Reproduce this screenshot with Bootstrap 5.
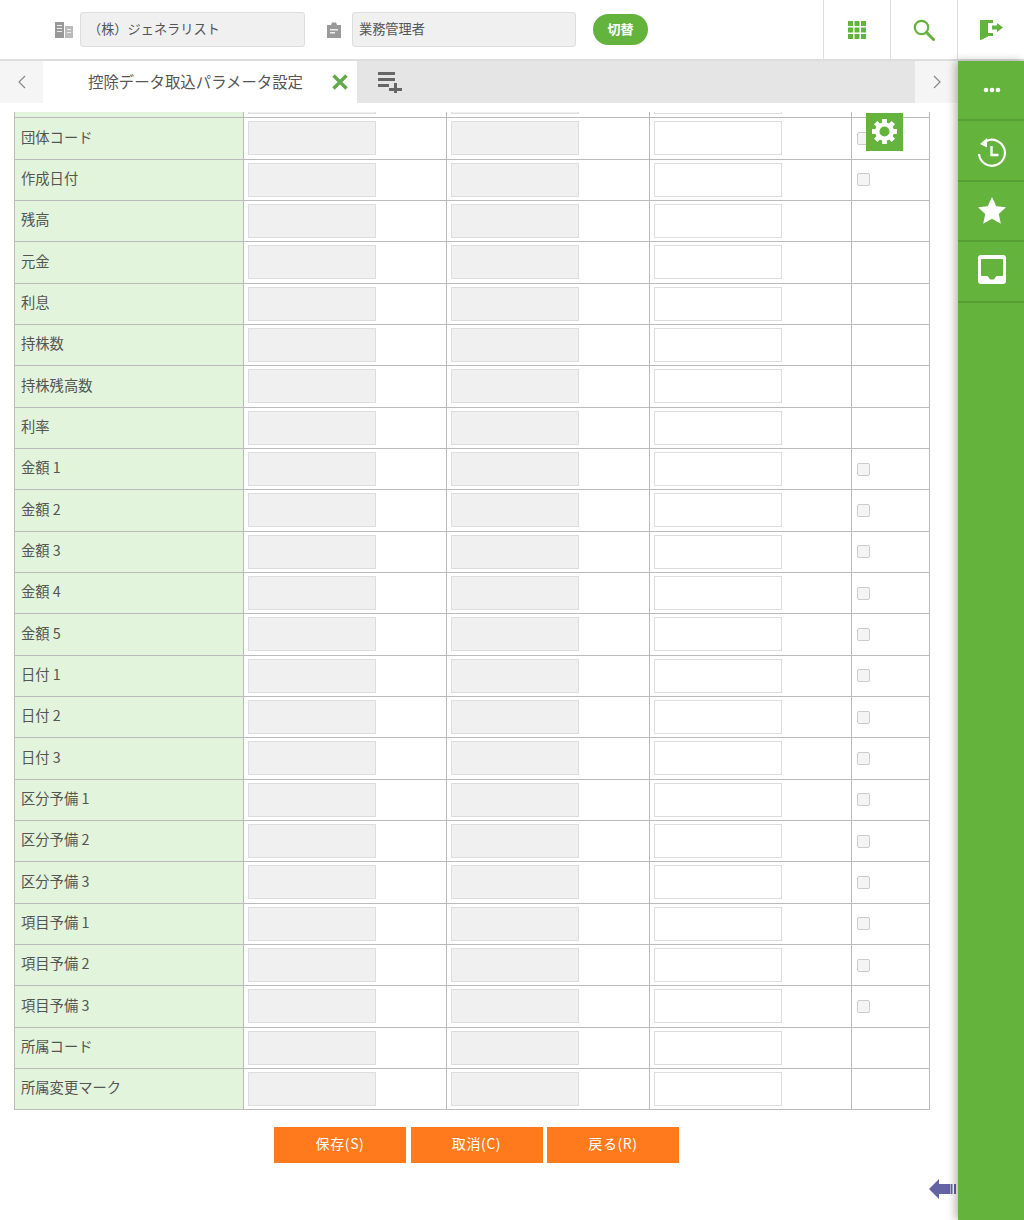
<!DOCTYPE html>
<html lang="ja">
<head>
<meta charset="utf-8">
<title>控除データ取込パラメータ設定</title>
<link href="https://cdn.jsdelivr.net/npm/bootstrap@5.3.0/dist/css/bootstrap.min.css" rel="stylesheet">
<style>
html,body{height:1220px;overflow:hidden}
body{font-family:"Noto Sans CJK JP","Liberation Sans",sans-serif;font-size:14px;color:#555;background:#fff}
.shell{position:relative;width:1024px;height:1220px;overflow:hidden}
.topbar{height:61px;border-bottom:2px solid #ddd}
.co-icon{width:18px;height:18px;fill:#999}
.co-field{height:35px;background:#f0f0f0;border:1px solid #ddd;border-radius:3px;color:#555;font-size:13.2px;padding:0 6px;line-height:31px}
.co-a{width:225px;margin-left:7px;padding-left:7px}
.co-b{width:224px;margin-left:9px}
.co-icon-b{margin-left:20px}
.sw-btn{width:55px;height:31px;margin-left:17px;background:#63b33c;color:#fff;border-radius:16px;font-size:13px;font-weight:700;padding:0 0 2px;border:0}
.sw-btn:hover{background:#63b33c;color:#fff}
.top-cell{width:67px;height:59px;border-left:1px solid #ddd}
.work{width:958px;height:1159px}
.tabbar{height:42px;background:#e5e5e5}
.tab-arrow{width:43px;background:#f5f5f5;color:#888}
.tab-on{width:314px;background:#fff;font-size:15.4px;color:#555;padding-left:45px;padding-right:9px}
.tab-add{margin-left:21px;padding-top:1px}
.clip{height:1005px;margin-top:9px;overflow:hidden;padding:0 28px 0 14px}
.grid{width:915px;table-layout:fixed;border-collapse:collapse;margin-top:-36px}
.grid td{height:41.33px;padding:0 4px;border:1px solid #bbb;vertical-align:middle}
.grid td.lab{background:#e2f4dc;padding:0 6px 4px;color:#555;font-size:14.3px}
.grid .cell-in{display:block;width:128px;height:34px;border:1px solid #ddd;background:#f0f0f0;padding:0 4px;border-radius:0}
.grid .cell-in.live{background:#fff}
.grid input[type=checkbox]{display:block;width:13px;height:13px;margin:0 0 0 1px;border:1px solid #ccc;border-radius:2px;background:#f4f4f4;appearance:none}
.act-row{margin-top:10px;padding-right:5px;gap:4.5px}
.act-btn{width:132px;height:36px;background:#ff7a1c;color:#fff;border:0;border-radius:0;font-size:14px;letter-spacing:.6px;padding:0 0 3px}
.act-btn:hover{background:#ff7a1c;color:#fff}
.rail{position:absolute;left:958px;top:61px;width:66px;height:1159px;background:#63b33c;box-shadow:-3px 0 8px rgba(0,0,0,.28)}
.rail-i{height:60.4px;padding-left:2px;border-bottom:2px solid #579f35}
.rail-clock{padding-top:4px}
.rail-box{padding-bottom:4px}
.gear-box{position:absolute;left:866px;top:113px;width:37px;height:38px;background:#63b33c;padding:0 1px 2px 0}
.back-arrow{position:absolute;left:929px;top:1178px}
</style>
</head>
<body>
<div class="shell">
  <header class="topbar d-flex align-items-center">
    <div class="d-flex align-items-center flex-grow-1" style="padding-left:55px">
      <svg class="co-icon" viewBox="0 0 18 18"><path d="M0 1h9v16H0z"/><path d="M10 5h8v12h-8z" fill="#bbb"/><path d="M2 4h5v1H2zM2 7h5v1H2zM2 10h5v1H2zM12 8h4v1h-4zM12 11h4v1h-4z" fill="#eee"/></svg>
      <div class="co-field co-a">（株）ジェネラリスト</div>
      <svg class="co-icon co-icon-b" viewBox="0 0 18 18"><path d="M2 4h4l1-2.500h4l1 2.500h4v13H2z"/><path d="M5 8h8v1.500H5zM5 11h5v1.500H5z" fill="#eee"/></svg>
      <div class="co-field co-b">業務管理者</div>
      <button type="button" class="btn sw-btn">切替</button>
    </div>
    <div class="top-cell d-flex align-items-center justify-content-center">
      <svg width="18" height="18" viewBox="0 0 18 18" fill="#63b33c"><path d="M0 0h5v5H0zM6.500 0h5v5h-5zM13 0h5v5h-5zM0 6.500h5v5H0zM6.500 6.500h5v5h-5zM13 6.500h5v5h-5zM0 13h5v5H0zM6.500 13h5v5h-5zM13 13h5v5h-5z"/></svg>
    </div>
    <div class="top-cell d-flex align-items-center justify-content-center">
      <svg width="22" height="22" viewBox="0 0 22 22" fill="none" stroke="#63b33c"><circle cx="8.500" cy="8.500" r="6.700" stroke-width="2.200"/><path d="M13.500 13.500l7 7" stroke-width="3" stroke-linecap="round"/></svg>
    </div>
    <div class="top-cell d-flex align-items-center justify-content-center">
      <svg width="23" height="20" viewBox="0 0 23 20" fill="#63b33c"><path d="M0 0h13v3H8v13.500L1 20H0z"/><path d="M8 13h5v3H8z"/><path d="M12 5.500h5V3l6 4.500-6 4.500V9.500h-5z"/></svg>
    </div>
  </header>
  <main class="work">
    <div class="tabbar d-flex">
      <div class="tab-arrow d-flex align-items-center justify-content-center">
        <svg width="8" height="14" viewBox="0 0 8 14" fill="none" stroke="#888" stroke-width="1.200"><path d="M7 1L1 7l6 6"/></svg>
      </div>
      <div class="tab-on d-flex align-items-center justify-content-between">
        <span>控除データ取込パラメータ設定</span>
        <svg width="16" height="16" viewBox="0 0 16 16" fill="none" stroke="#63a84a" stroke-width="3.400"><path d="M1.500 1.500l13 13M14.500 1.500l-13 13"/></svg>
      </div>
      <div class="tab-add d-flex align-items-center flex-grow-1">
        <svg width="25" height="21" viewBox="0 0 25 21" fill="#666"><path d="M0 0h17v3H0zM0 6h17v3H0zM0 12h11v3H0zM16 11h3v5h5v3h-5v2h-3v-2h-5v-3h5z"/></svg>
      </div>
      <div class="tab-arrow d-flex align-items-center justify-content-center">
        <svg width="8" height="14" viewBox="0 0 8 14" fill="none" stroke="#888" stroke-width="1.200"><path d="M1 1l6 6-6 6"/></svg>
      </div>
    </div>
    <div class="clip">
      <table class="grid">
        <colgroup><col style="width:229px"><col style="width:203px"><col style="width:203px"><col style="width:202px"><col style="width:78px"></colgroup>
        <tbody>
          <tr><td class="lab">&nbsp;</td><td><input class="form-control cell-in" disabled></td><td><input class="form-control cell-in" disabled></td><td><input class="form-control cell-in live"></td><td></td></tr>
          <tr><td class="lab">団体コード</td><td><input class="form-control cell-in" disabled></td><td><input class="form-control cell-in" disabled></td><td><input class="form-control cell-in live"></td><td><input type="checkbox"></td></tr>
          <tr><td class="lab">作成日付</td><td><input class="form-control cell-in" disabled></td><td><input class="form-control cell-in" disabled></td><td><input class="form-control cell-in live"></td><td><input type="checkbox"></td></tr>
          <tr><td class="lab">残高</td><td><input class="form-control cell-in" disabled></td><td><input class="form-control cell-in" disabled></td><td><input class="form-control cell-in live"></td><td></td></tr>
          <tr><td class="lab">元金</td><td><input class="form-control cell-in" disabled></td><td><input class="form-control cell-in" disabled></td><td><input class="form-control cell-in live"></td><td></td></tr>
          <tr><td class="lab">利息</td><td><input class="form-control cell-in" disabled></td><td><input class="form-control cell-in" disabled></td><td><input class="form-control cell-in live"></td><td></td></tr>
          <tr><td class="lab">持株数</td><td><input class="form-control cell-in" disabled></td><td><input class="form-control cell-in" disabled></td><td><input class="form-control cell-in live"></td><td></td></tr>
          <tr><td class="lab">持株残高数</td><td><input class="form-control cell-in" disabled></td><td><input class="form-control cell-in" disabled></td><td><input class="form-control cell-in live"></td><td></td></tr>
          <tr><td class="lab">利率</td><td><input class="form-control cell-in" disabled></td><td><input class="form-control cell-in" disabled></td><td><input class="form-control cell-in live"></td><td></td></tr>
          <tr><td class="lab">金額 1</td><td><input class="form-control cell-in" disabled></td><td><input class="form-control cell-in" disabled></td><td><input class="form-control cell-in live"></td><td><input type="checkbox"></td></tr>
          <tr><td class="lab">金額 2</td><td><input class="form-control cell-in" disabled></td><td><input class="form-control cell-in" disabled></td><td><input class="form-control cell-in live"></td><td><input type="checkbox"></td></tr>
          <tr><td class="lab">金額 3</td><td><input class="form-control cell-in" disabled></td><td><input class="form-control cell-in" disabled></td><td><input class="form-control cell-in live"></td><td><input type="checkbox"></td></tr>
          <tr><td class="lab">金額 4</td><td><input class="form-control cell-in" disabled></td><td><input class="form-control cell-in" disabled></td><td><input class="form-control cell-in live"></td><td><input type="checkbox"></td></tr>
          <tr><td class="lab">金額 5</td><td><input class="form-control cell-in" disabled></td><td><input class="form-control cell-in" disabled></td><td><input class="form-control cell-in live"></td><td><input type="checkbox"></td></tr>
          <tr><td class="lab">日付 1</td><td><input class="form-control cell-in" disabled></td><td><input class="form-control cell-in" disabled></td><td><input class="form-control cell-in live"></td><td><input type="checkbox"></td></tr>
          <tr><td class="lab">日付 2</td><td><input class="form-control cell-in" disabled></td><td><input class="form-control cell-in" disabled></td><td><input class="form-control cell-in live"></td><td><input type="checkbox"></td></tr>
          <tr><td class="lab">日付 3</td><td><input class="form-control cell-in" disabled></td><td><input class="form-control cell-in" disabled></td><td><input class="form-control cell-in live"></td><td><input type="checkbox"></td></tr>
          <tr><td class="lab">区分予備 1</td><td><input class="form-control cell-in" disabled></td><td><input class="form-control cell-in" disabled></td><td><input class="form-control cell-in live"></td><td><input type="checkbox"></td></tr>
          <tr><td class="lab">区分予備 2</td><td><input class="form-control cell-in" disabled></td><td><input class="form-control cell-in" disabled></td><td><input class="form-control cell-in live"></td><td><input type="checkbox"></td></tr>
          <tr><td class="lab">区分予備 3</td><td><input class="form-control cell-in" disabled></td><td><input class="form-control cell-in" disabled></td><td><input class="form-control cell-in live"></td><td><input type="checkbox"></td></tr>
          <tr><td class="lab">項目予備 1</td><td><input class="form-control cell-in" disabled></td><td><input class="form-control cell-in" disabled></td><td><input class="form-control cell-in live"></td><td><input type="checkbox"></td></tr>
          <tr><td class="lab">項目予備 2</td><td><input class="form-control cell-in" disabled></td><td><input class="form-control cell-in" disabled></td><td><input class="form-control cell-in live"></td><td><input type="checkbox"></td></tr>
          <tr><td class="lab">項目予備 3</td><td><input class="form-control cell-in" disabled></td><td><input class="form-control cell-in" disabled></td><td><input class="form-control cell-in live"></td><td><input type="checkbox"></td></tr>
          <tr><td class="lab">所属コード</td><td><input class="form-control cell-in" disabled></td><td><input class="form-control cell-in" disabled></td><td><input class="form-control cell-in live"></td><td></td></tr>
          <tr><td class="lab">所属変更マーク</td><td><input class="form-control cell-in" disabled></td><td><input class="form-control cell-in" disabled></td><td><input class="form-control cell-in live"></td><td></td></tr>
        </tbody>
      </table>
    </div>
    <div class="act-row d-flex justify-content-center">
      <button type="button" class="btn act-btn">保存(S)</button>
      <button type="button" class="btn act-btn">取消(C)</button>
      <button type="button" class="btn act-btn">戻る(R)</button>
    </div>
  </main>
  <div class="gear-box d-flex align-items-center justify-content-center">
    <svg width="25" height="25" viewBox="0 0 26 26"><g fill="#fff"><path id="t" d="M10.500 0h5v6h-5z"/><use href="#t" transform="rotate(45 13 13)"/><use href="#t" transform="rotate(90 13 13)"/><use href="#t" transform="rotate(135 13 13)"/><use href="#t" transform="rotate(180 13 13)"/><use href="#t" transform="rotate(225 13 13)"/><use href="#t" transform="rotate(270 13 13)"/><use href="#t" transform="rotate(315 13 13)"/></g><circle cx="13" cy="13" r="7.500" fill="none" stroke="#fff" stroke-width="4.500"/></svg>
  </div>
  <svg class="back-arrow" width="27" height="22" viewBox="0 0 27 22" fill="#6464a4"><path d="M0 11L10 1v5h11v10H10v5z"/><path d="M21.500 6h2v10h-2zM25 6h2v10h-2z"/></svg>
  <aside class="rail">
    <div class="rail-i d-flex align-items-center justify-content-center">
      <svg width="18" height="6" viewBox="0 0 18 6" fill="#fff"><circle cx="3" cy="3" r="2.300"/><circle cx="9" cy="3" r="2.300"/><circle cx="15" cy="3" r="2.300"/></svg>
    </div>
    <div class="rail-i rail-clock d-flex align-items-center justify-content-center">
      <svg width="30" height="30" viewBox="0 0 30 30" fill="none" stroke="#fff" stroke-width="2.200"><path d="M9 3.200A13 13 0 1 1 2 16"/><path d="M10 0v9.500L3 6z" fill="#fff" stroke="none"/><path d="M14.500 8v9h7" stroke-width="2.400"/></svg>
    </div>
    <div class="rail-i d-flex align-items-center justify-content-center">
      <svg width="28" height="27" viewBox="0 0 28 27" fill="#fff"><path d="M14 0l4.300 9.200 9.700 1.100-7.200 6.600 2 9.800-8.800-5-8.800 5 2-9.800L0 10.300l9.700-1.100z"/></svg>
    </div>
    <div class="rail-i rail-box d-flex align-items-center justify-content-center">
      <svg width="28" height="29" viewBox="0 0 28 29"><path fill="#fff" fill-rule="evenodd" d="M3 0h22a3 3 0 0 1 3 3v23a3 3 0 0 1-3 3H3a3 3 0 0 1-3-3V3a3 3 0 0 1 3-3zM4 4a1 1 0 0 0-1 1v15a1 1 0 0 0 1 1h5c1 0 1.500 1 2 2 .5 1 1 1.500 3 1.500s2.500-.5 3-1.500c.5-1 1-2 2-2h5a1 1 0 0 0 1-1V5a1 1 0 0 0-1-1z"/></svg>
    </div>
  </aside>
</div>
<script src="https://cdn.jsdelivr.net/npm/bootstrap@5.3.0/dist/js/bootstrap.bundle.min.js"></script>
</body>
</html>
